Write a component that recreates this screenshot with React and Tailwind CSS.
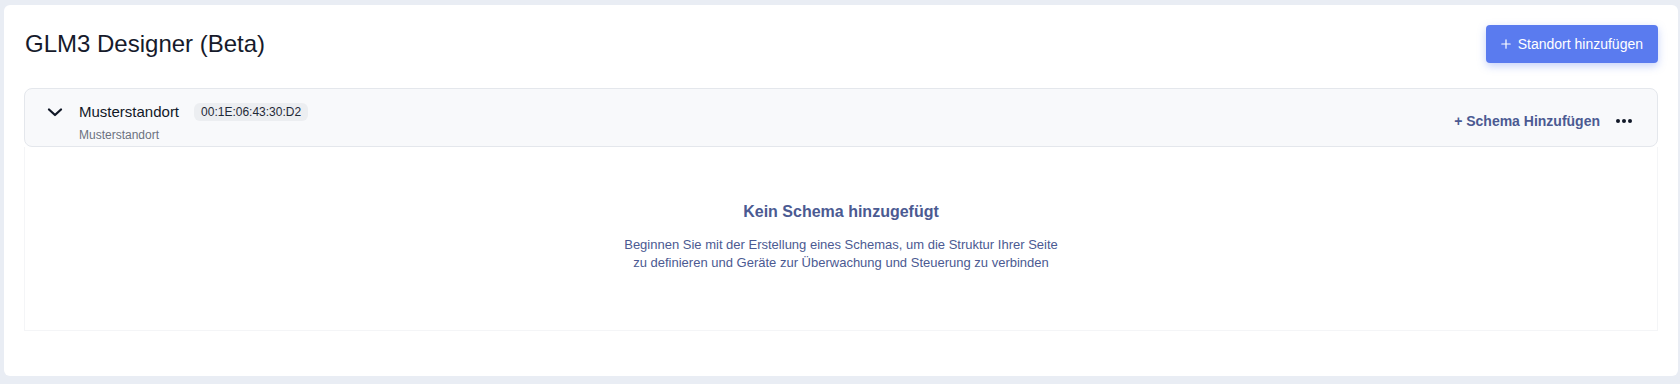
import { useState } from 'react'

function ChevronDown({ className }) {
  return (
    <svg viewBox="0 0 24 24" className={className} fill="none" stroke="currentColor" strokeWidth="2.3" strokeLinecap="round" strokeLinejoin="round">
      <path d="m6 9.5 6 5.5 6-5.5" />
    </svg>
  )
}

function PlusIcon({ className }) {
  return (
    <svg viewBox="0 0 10 10" className={className} fill="none" stroke="currentColor" strokeWidth="1.2" strokeLinecap="round">
      <path d="M5 0.8v8.4M0.8 5h8.4" />
    </svg>
  )
}

function SiteRow({ site }) {
  const [open, setOpen] = useState(true)
  return (
    <div>
      <div className="flex items-center justify-between rounded-lg border border-[#e4e7ec] bg-[#f8f9fb] pl-[18px] pr-[17px] pt-[12px] pb-[3px]">
        <div className="flex items-start">
          <button type="button" onClick={() => setOpen(!open)} className="text-[#111827]">
            <ChevronDown className="w-6 h-6 mt-[-1px]" />
          </button>
          <div className="ml-[12px] flex flex-col">
            <div className="flex items-center leading-[22px]">
              <span className="text-[15px] text-[#111827]">{site.name}</span>
              <span className="ml-[15px] rounded-md bg-[#eceef1] px-[7px] text-[12px] leading-[18px] text-[#1f2937]">
                {site.mac}
              </span>
            </div>
            <span className="mt-[4px] text-[12px] leading-4 text-[#6b7280]">{site.name}</span>
          </div>
        </div>
        <div className="flex items-center gap-[8px] self-center mt-[-2px]">
          <button type="button" className="text-[14px] font-bold text-[#4b5a92]">
            + Schema Hinzufügen
          </button>
          <button type="button" className="flex items-center gap-[2px] px-2 py-1">
            <span className="w-[4px] h-[4px] rounded-full bg-[#111827]" />
            <span className="w-[4px] h-[4px] rounded-full bg-[#111827]" />
            <span className="w-[4px] h-[4px] rounded-full bg-[#111827]" />
          </button>
        </div>
      </div>

      {open && (
        <div className="border border-t-0 border-[#f4f5f7] pt-[53px] pb-[58px] flex flex-col items-center text-center">
          <h3 className="text-[16px] leading-6 font-bold text-[#4b5a92]">Kein Schema hinzugefügt</h3>
          <p className="mt-[12px] text-[13px] leading-[18px] text-[#4b5a92]">
            Beginnen Sie mit der Erstellung eines Schemas, um die Struktur Ihrer Seite
            <br />
            zu definieren und Geräte zur Überwachung und Steuerung zu verbinden
          </p>
        </div>
      )}
    </div>
  )
}

export default function App() {
  const sites = [{ id: 1, name: 'Musterstandort', mac: '00:1E:06:43:30:D2' }]

  return (
    <div className="min-h-[384px] bg-[#e9edf4] pt-[5px] pb-[7px] pl-[4px] pr-[2px] font-['Liberation_Sans',Arial,sans-serif]">
      <div className="rounded-md bg-white px-5 pt-5 pb-[45px]">
        <header className="flex items-center justify-between h-[38px]">
          <h1 className="text-[24px] leading-8 text-[#161a2b] ml-[1px]">GLM3 Designer (Beta)</h1>
          <button
            type="button"
            className="flex items-center gap-[7px] h-[38px] rounded-[4px] bg-[#5a7bef] px-[15px] text-[14px] text-white shadow-[0_3px_8px_rgba(90,123,239,0.35)]"
          >
            <PlusIcon className="w-[10px] h-[10px]" />
            Standort hinzufügen
          </button>
        </header>

        <div className="mt-[25px] flex flex-col gap-3">
          {sites.map((s) => (
            <SiteRow key={s.id} site={s} />
          ))}
        </div>
      </div>
    </div>
  )
}
